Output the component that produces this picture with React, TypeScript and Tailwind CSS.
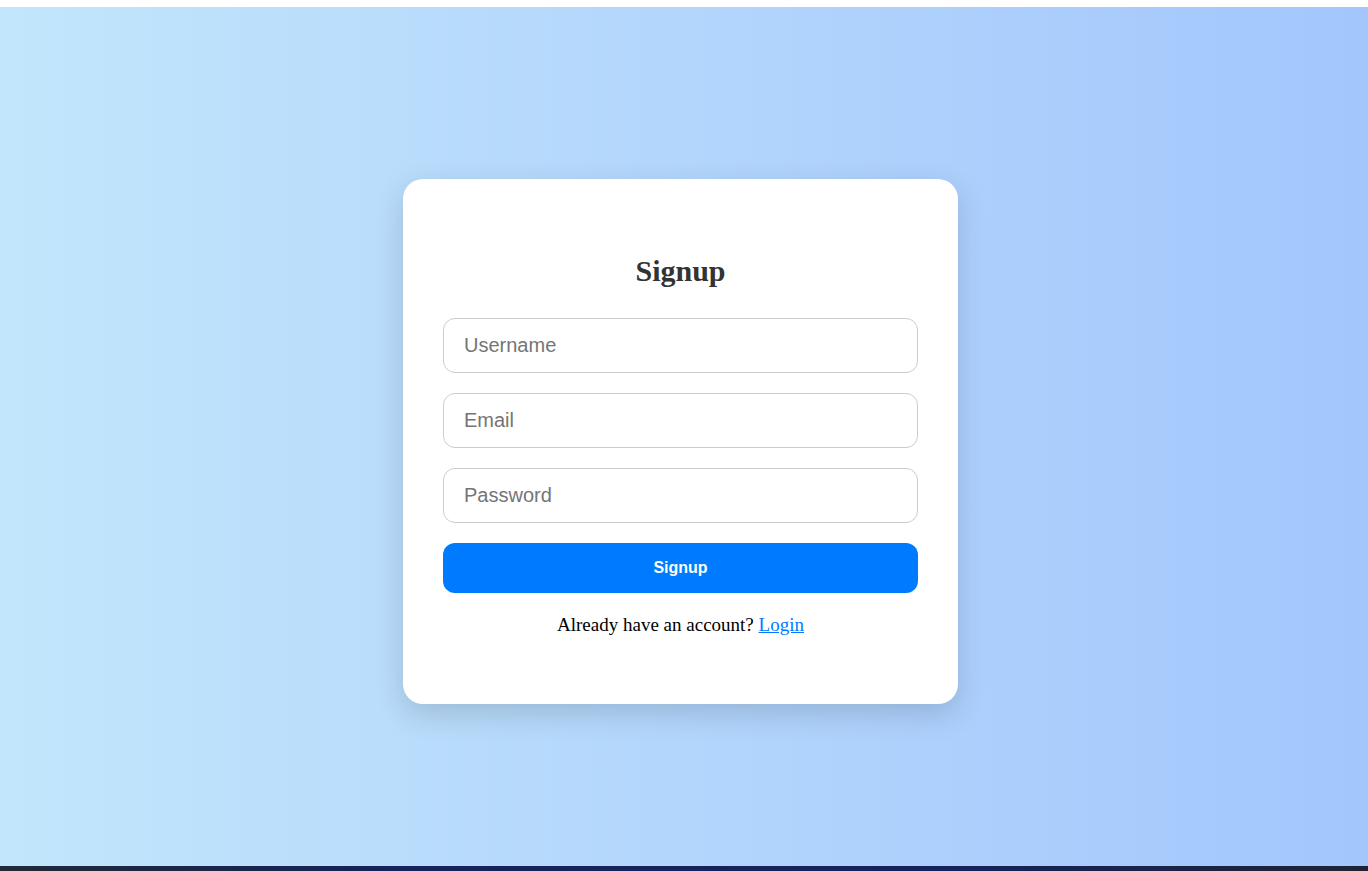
export default function App() {
  return (
    <div className="w-full h-[871px] flex flex-col bg-white overflow-hidden">
      <div className="h-[7px] bg-white shrink-0" />
      <div className="flex-1 flex items-center justify-center pt-[10px] pr-[7px] bg-[linear-gradient(to_right,#c2e6fb,#a3c6fd)]">
        <div className="w-[555px] bg-white rounded-[20px] px-10 pt-[75px] pb-[68px] shadow-[0_10px_30px_rgba(0,0,0,0.15)] flex flex-col">
          <h2 className="text-center text-[30px] leading-[34px] font-bold text-[#333] mb-[30px] font-['Liberation_Serif',serif]">
            Signup
          </h2>
          <div className="flex flex-col gap-5">
            <input
              placeholder="Username"
              className="h-[55px] w-full rounded-[12px] border border-[#ccc] px-5 text-[20px] font-['Liberation_Sans',Arial,sans-serif] placeholder:text-[#757575] outline-none"
            />
            <input
              placeholder="Email"
              className="h-[55px] w-full rounded-[12px] border border-[#ccc] px-5 text-[20px] font-['Liberation_Sans',Arial,sans-serif] placeholder:text-[#757575] outline-none"
            />
            <input
              placeholder="Password"
              type="password"
              className="h-[55px] w-full rounded-[12px] border border-[#ccc] px-5 text-[20px] font-['Liberation_Sans',Arial,sans-serif] placeholder:text-[#757575] outline-none"
            />
          </div>
          <button className="mt-5 h-[50px] w-full rounded-[12px] bg-[#007bff] text-white text-[16px] font-bold font-['Liberation_Sans',Arial,sans-serif]">
            Signup
          </button>
          <p className="mt-5 text-center text-[19px] leading-[23px] text-black font-['Liberation_Serif',serif]">
            Already have an account?{" "}
            <a href="#" className="text-[#007bff] underline">
              Login
            </a>
          </p>
        </div>
      </div>
      <div className="h-[5px] shrink-0 bg-[linear-gradient(to_right,#1f2937,#16225a_30%,#16225a_70%,#1f2433)]" />
    </div>
  );
}
